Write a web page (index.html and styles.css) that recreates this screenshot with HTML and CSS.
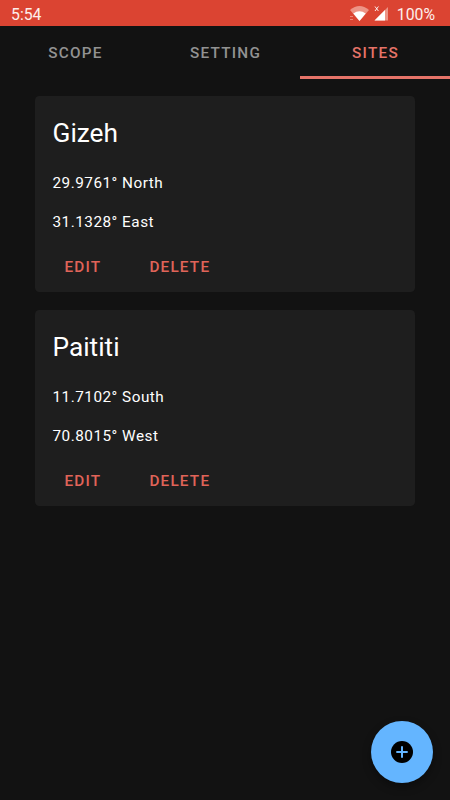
FILE: index.html
```html
<!DOCTYPE html>
<html lang="en">
<head>
<meta charset="utf-8">
<title>Sites</title>
<link rel="stylesheet" href="styles.css">
</head>
<body>
<div class="app">
  <header class="status">
    <span>5:54</span>
    <div class="status-right">
      <svg class="signals" width="42" height="22" viewBox="0 0 42 22" aria-hidden="true">
        <path d="M0 7Q9.500 -.8 19 7L9.500 18Z" fill="#ed9486"/>
        <path d="M3.300 10.500Q9.500 6 15.700 10.500L9.500 18Z" fill="#fff"/>
        <path d="M0 13.500h3M0 16.500h3" stroke="#ec8477"/>
        <path d="M24.500 17.500L38 4v13.500Z" fill="#ed9486"/>
        <path d="M24.500 17.500L35 7v10.500Z" fill="#fff"/>
        <path d="M25 3.500l3.400 4.500M28.400 3.500l-3.400 4.500" stroke="#fff" stroke-width=".9"/>
      </svg>
      <span>100%</span>
    </div>
  </header>
  <nav class="tabs">
    <div class="tab">SCOPE</div>
    <div class="tab">SETTING</div>
    <div class="tab active">SITES</div>
  </nav>
  <main class="sites">
    <section class="card">
      <h2>Gizeh</h2>
      <p>29.9761° North</p>
      <p>31.1328° East</p>
      <div class="actions"><button>EDIT</button><button>DELETE</button></div>
    </section>
    <section class="card">
      <h2>Paititi</h2>
      <p>11.7102° South</p>
      <p>70.8015° West</p>
      <div class="actions"><button>EDIT</button><button>DELETE</button></div>
    </section>
  </main>
  <button class="fab" aria-label="Add">
    <svg width="22" height="22" viewBox="0 0 22 22"><circle cx="11" cy="11" r="11" fill="#000"/><path d="M11 5.300v11.400M5.300 11h11.400" stroke="#64b5ff" stroke-width="2"/></svg>
  </button>
</div>
</body>
</html>
```
FILE: styles.css
```css
* { box-sizing: border-box; }
body {
  margin: 0;
  background: #121212;
  color: #fff;
  font-family: Roboto, "Liberation Sans", sans-serif;
}
.app { position: relative; height: 800px; overflow: hidden; }
.status {
  height: 26px;
  padding: 2px 15px 0 11px;
  display: flex;
  align-items: center;
  justify-content: space-between;
  background: #db4432;
  color: #fdeeeb;
  font-size: 15.8px;
}
.status-right { display: flex; align-items: center; gap: 5px; }
.signals { display: block; }
.tabs { display: grid; grid-template-columns: repeat(3, 1fr); height: 53px; }
.tab {
  display: flex;
  align-items: center;
  justify-content: center;
  padding: 4px 0 0 1px;
  border-bottom: 3px solid transparent;
  color: #929292;
  font-size: 15.3px;
  font-weight: 500;
  letter-spacing: 1.25px;
}
.tab.active { color: #e57368; border-color: #e57368; }
.sites { display: flex; flex-direction: column; gap: 18px; padding: 17px 35px; }
.card {
  height: 196px;
  padding: 17.5px;
  background: #1e1e1e;
  border-radius: 4.4px;
}
h2 { margin: 0 0 20px; font-size: 26.25px; font-weight: 400; line-height: 38px; }
p { margin: 0 0 17px; font-size: 15.3px; line-height: 22px; letter-spacing: .5px; }
.actions { display: flex; gap: 24px; margin-top: -2px; }
.actions button {
  height: 39px;
  padding: 0 12px;
  border: 0;
  background: none;
  color: #e06459;
  font: 500 15.3px Roboto, sans-serif;
  letter-spacing: 1.2px;
}
.fab {
  position: absolute;
  right: 17px;
  bottom: 17px;
  width: 62px;
  height: 62px;
  padding: 0;
  display: flex;
  align-items: center;
  justify-content: center;
  border: 0;
  border-radius: 50%;
  background: #64b5ff;
  box-shadow: 0 4px 8px rgba(0, 0, 0, .35);
}
```
